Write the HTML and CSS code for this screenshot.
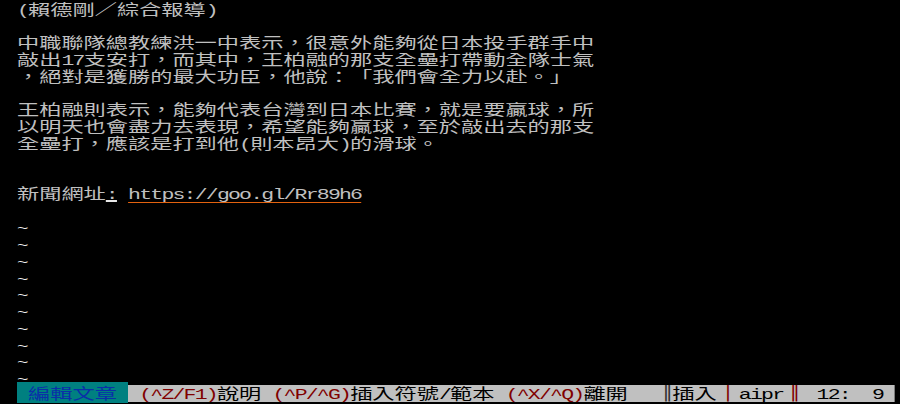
FILE: index.html
```html
<!DOCTYPE html>
<html lang="zh-Hant">
<head>
    <meta charset="UTF-8">
    <title>編輯文章</title>
    <link rel="stylesheet" href="styles.css">
</head>
<body>
    <div class="term">
        <div class="row"><span class="en">(</span>賴德剛／綜合報導<span class="en">)</span></div>
        <div class="row"></div>
        <div class="row">中職聯隊總教練洪一中表示，很意外能夠從日本投手群手中</div>
        <div class="row">敲出<span class="en">17</span>支安打，而其中，王柏融的那支全壘打帶動全隊士氣</div>
        <div class="row">，絕對是獲勝的最大功臣，他說：「我們會全力以赴。」</div>
        <div class="row"></div>
        <div class="row">王柏融則表示，能夠代表台灣到日本比賽，就是要贏球，所</div>
        <div class="row">以明天也會盡力去表現，希望能夠贏球，至於敲出去的那支</div>
        <div class="row">全壘打，應該是打到他<span class="en">(</span>則本昂大<span class="en">)</span>的滑球。</div>
        <div class="row"></div>
        <div class="row"></div>
        <div class="row">新聞網址<span class="en colon">:</span><span class="en"> </span><span class="en link">https://goo.gl/Rr89h6</span></div>
        <div class="row"></div>
        <div class="row tilde"><span class="en">~</span></div>
        <div class="row tilde"><span class="en">~</span></div>
        <div class="row tilde"><span class="en">~</span></div>
        <div class="row tilde"><span class="en">~</span></div>
        <div class="row tilde"><span class="en">~</span></div>
        <div class="row tilde"><span class="en">~</span></div>
        <div class="row tilde"><span class="en">~</span></div>
        <div class="row tilde"><span class="en">~</span></div>
        <div class="row tilde"><span class="en">~</span></div>
        <div class="row tilde"><span class="en">~</span></div>
        <!-- status bar, 79 cols -->
        <div class="row status"><span class="mode"><span class="en"> </span>編輯文章<span class="en"> </span></span><span class="red en"> (^Z/F1)</span>說明<span class="en"> </span><span class="red en">(^P/^G)</span>插入符號<span class="en">/</span>範本<span class="en"> </span><span class="red en">(^X/^Q)</span>離開<span class="en">   </span><span class="sep w1">║</span>插入<span class="sep w2 red">│</span><span class="en">aipr</span><span class="sep w2 red">║</span><span class="en"> 12:  9 </span></div>
    </div>
</body>
</html>
```

FILE: styles.css
```css
html, body {
    margin: 0;
    padding: 0;
    background: #000;
}
body {
    width: 900px;
    height: 404px;
    overflow: hidden;
}

/* 80 cols x 24 rows, a col is 7.5px before the stretch (11.1px after) */
.term {
    width: 600px;
    margin-left: 17px;
    transform: scaleX(1.48);
    transform-origin: 0 0;
    font-family: "Noto Sans CJK TC", sans-serif;
    font-size: 15px;
    color: #c0c0c0;
    text-spacing-trim: space-all;
    font-kerning: none;
}
.row {
    height: 16.75px;
    line-height: 16.75px;
    white-space: pre;
    position: relative;
    top: 0.5px;
}
.en {
    font-family: "Liberation Mono", "DejaVu Sans Mono", monospace;
    font-size: 14.5px;
    letter-spacing: -1.2px;
}

.colon {
    text-decoration: underline;
    text-decoration-color: #e8e8e8;
    text-decoration-thickness: 2px;
    text-underline-offset: 1px;
}
.link {
    text-decoration: underline;
    text-decoration-color: #e2620f;
    text-decoration-thickness: 1px;
    text-underline-offset: 3px;
}
.tilde {
    color: #ececec;
}
.tilde .en {
    font-size: 13px;
    letter-spacing: -0.3px;
}

/* bottom status line */
.status {
    top: 0;
    width: 592.5px;
    background: #c0c0c0;
    color: #000;
}
.status .mode {
    background: #008080;
    color: #0a2fa8;
}
.status .red {
    color: #800000;
}
.sep {
    display: inline-block;
    text-align: center;
    font-family: "DejaVu Sans Mono", monospace;
    font-size: 14px;
    vertical-align: top;
}
.w1 {
    width: 7.5px;
    color: #303030;
}
.w2 {
    width: 15px;
}
```
